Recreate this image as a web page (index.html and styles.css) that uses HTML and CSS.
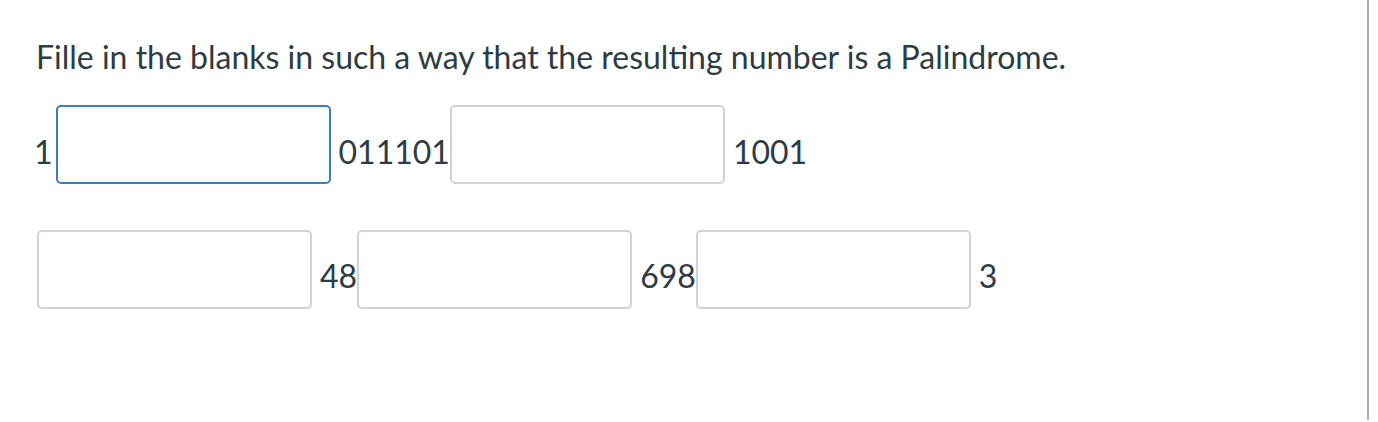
FILE: index.html
```html
<!DOCTYPE html>
<html lang="en">
<head>
<meta charset="utf-8">
<title>Fill in the blanks</title>
<link rel="stylesheet" href="styles.css">
</head>
<body>
<div class="page">
  <div class="question">
    <p class="prompt">Fille in the blanks in such a way that the resulting number is a Palindrome.</p>
    <div class="row row-first">
      <span class="txt txt-lead">1</span>
      <input class="blank focused" type="text" aria-label="blank 1">
      <span class="txt txt-after-lead">011101</span>
      <input class="blank" type="text" aria-label="blank 2">
      <span class="txt txt-gap">1001</span>
    </div>
    <div class="row row-second">
      <input class="blank" type="text" aria-label="blank 3">
      <span class="txt txt-gap">48</span>
      <input class="blank" type="text" aria-label="blank 4">
      <span class="txt txt-gap">698</span>
      <input class="blank" type="text" aria-label="blank 5">
      <span class="txt txt-gap">3</span>
    </div>
  </div>
</div>
</body>
</html>
```

FILE: styles.css
```css
html, body {
  margin: 0;
  padding: 0;
  background: #ffffff;
}

body {
  font-family: Lato, "Open Sans", "Liberation Sans", sans-serif;
  color: #2d3b45;
}

.page {
  width: 1367px;
  height: 420px;
  border-right: 2px solid #acacac;
  box-sizing: content-box;
}

.question {
  padding: 34px 0 0 36px;
}

.prompt {
  margin: 0;
  font-size: 32px;
  line-height: 46px;
}

.row {
  display: flex;
  align-items: flex-end;
  margin-top: 46px;
}

.row-first {
  margin-top: 25px;
}

.row-second {
  margin-left: 1px;
}

.txt {
  font-size: 32px;
  line-height: 32px;
  margin-bottom: 16px;
  margin-left: 7px;
}

.row-second .txt {
  margin-bottom: 17px;
}

.txt-lead {
  margin-left: -2px;
  margin-right: 3px;
}

.txt-after-lead {
  margin-left: 8px;
}

.txt-gap {
  margin-left: 8px;
}

.blank {
  width: 275px;
  height: 79px;
  box-sizing: border-box;
  border: 2px solid #d2d2d2;
  border-radius: 5px;
  background: #fff;
  padding: 0 10px;
  font: inherit;
  font-size: 24px;
  outline: none;
}

.blank.focused {
  border-color: #3c7dbf;
}
```
